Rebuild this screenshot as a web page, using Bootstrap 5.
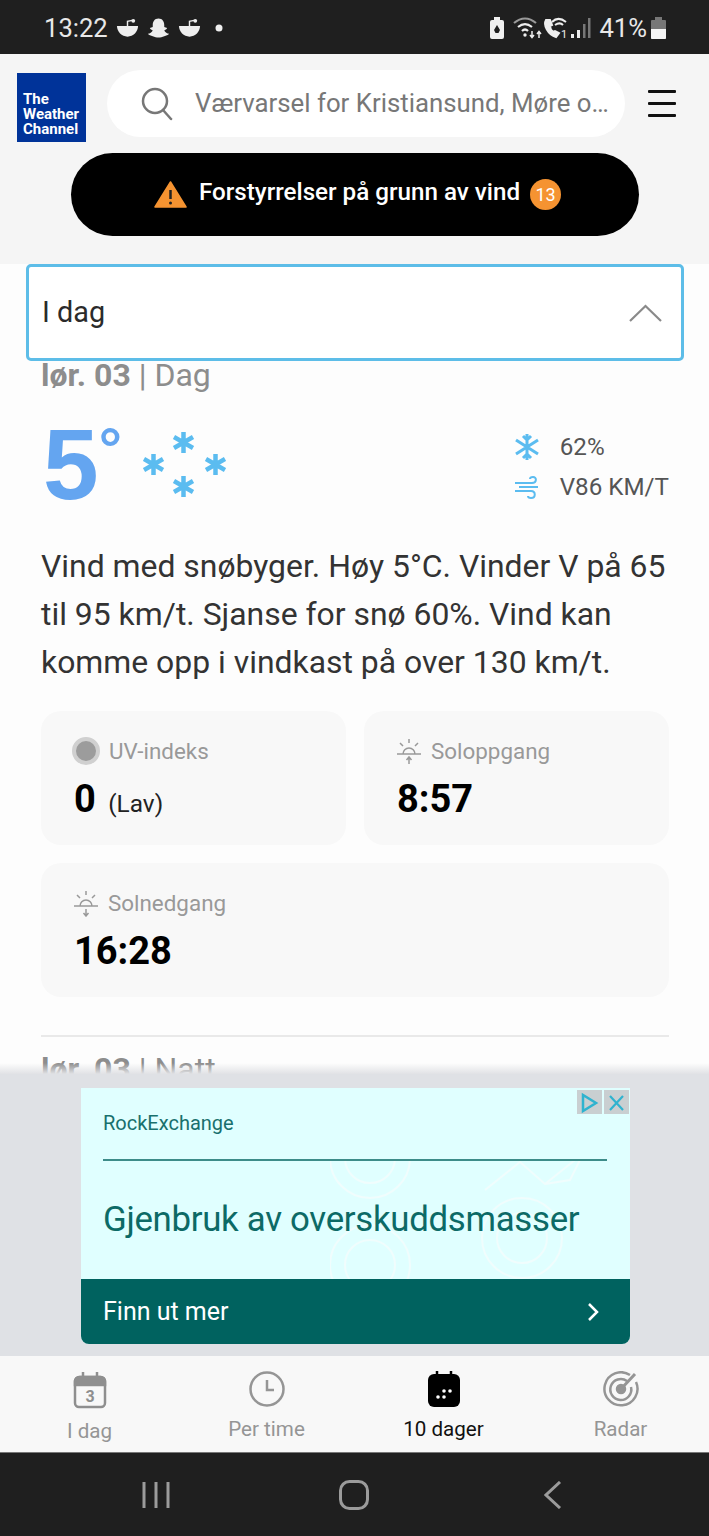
<!DOCTYPE html>
<html lang="no">
<head>
  <meta charset="UTF-8">
  <title>Værvarsel</title>
  <link href="https://cdn.jsdelivr.net/npm/bootstrap@5.3.0/dist/css/bootstrap.min.css" rel="stylesheet">
  <style>
    body { background: #fdfdfd; font-family: Roboto, "Liberation Sans", sans-serif; color: #333; }
    .phone { width: 709px; height: 1536px; overflow: hidden; }
    .status-bar { height: 54px; background: #1f1f1f; color: #e8e8e8; font-size: 25.6px; padding: 2px 43px 0 44px; flex: none; }
    .status-bar svg { display: block; }
    .note-icon { margin-left: 8px; }
    .note-dot { margin-left: 14px; }
    .top-area { height: 210px; background: #f5f5f5; flex: none; padding: 16px 33px 0 17px; }
    .wx-logo { width: 69px; height: 69px; margin-top: 3px; background: #003399; color: #fff; font-size: 15px; font-weight: 700; line-height: 15px; padding: 19px 0 0 6px; flex: none; }
    .search-pill { width: 518px; height: 67px; margin-left: 21px; padding-left: 34px; padding-right: 16px; background: #fff; color: #777; font-size: 25.8px; flex: none; }
    .search-pill svg { flex: none; margin-right: 22px; }
    .burger { width: 28px; margin-left: 23px; margin-top: 20px; flex: none; }
    .burger i { display: block; height: 3px; background: #111; margin-bottom: 9px; border-radius: 1px; }
    .alert-pill { width: 568px; height: 83px; margin: 11px 0 0 54px; padding-left: 5px; background: #000; color: #fff; font-size: 24.2px; font-weight: 500; border-radius: 42px; }
    .alert-text { margin-bottom: 5px; }
    .alert-num { width: 31px; height: 31px; border-radius: 50%; background: #f59331; font-size: 18px; font-weight: 400; margin-left: 10px; }
    .main-area { flex: 1 1 auto; overflow: hidden; position: relative; min-height: 0; padding: 0 40px 0 41px; }
    .day-select { height: 97px; margin: 0 -15px -1px; padding: 0 19px 0 13px; border: 3px solid #5dbde8; border-radius: 5px; font-size: 28.8px; color: #2b2b2b; background: #fff; }
    .part-title { font-size: 32px; color: #8d8d8d; line-height: 30px; }
    .now-row { height: 105px; margin-top: 29px; }
    .temp { font-family: "Liberation Sans", sans-serif; font-size: 100px; font-weight: 700; line-height: 90px; color: #64a5f0; margin-left: 2px; }
    .deg { font-family: "Liberation Sans", sans-serif; font-size: 58px; font-weight: 700; line-height: 50px; color: #64a5f0; margin-top: 4px; }
    .snow-icon { margin-left: 21px; margin-top: 13px; }
    .now-facts { font-size: 24.2px; color: #555; padding-top: 10px; }
    .now-facts svg { margin-right: 20px; }
    .forecast-text { font-size: 31.9px; line-height: 48px; color: #333; margin: 18px 0 25px; }
    .fact-grid { --bs-gutter-x: 18px; --bs-gutter-y: 18px; }
    .fact-box { background: #f8f8f8; border-radius: 20px; height: 134px; padding: 27px 0 0 32px; }
    .fact-label { font-size: 22.4px; color: #999; line-height: 26px; height: 26px; }
    .fact-label svg { margin-right: 9px; }
    .fact-value { font-size: 38px; font-weight: 700; color: #000; line-height: 44px; margin-top: 13px; margin-left: 1px; }
    .fact-value span { font-size: 24.4px; font-weight: 400; color: #222; margin-left: 3px; }
    .uv-dot { width: 28px; height: 28px; border-radius: 50%; background: #9c9c9c; border: 4px solid #d0d0d0; margin-left: -1px; margin-right: 9px; }
    .sep { border-top: 2px solid #e9e9e9; margin-top: 38px; }
    .night-title { margin-top: 17px; }
    .fade-bottom { position: absolute; left: 0; right: 0; bottom: 0; height: 11px; background: linear-gradient(rgba(225,226,229,0), #e1e2e5); }
    .ad-area { height: 282px; background: #dfe1e5; padding: 14px 79px 12px 81px; flex: none; }
    .ad-box { height: 256px; background: #e0ffff; border-radius: 0 0 8px 8px; overflow: hidden; position: relative; }
    .ad-marks { position: absolute; right: 0; top: 72px; }
    .ad-buttons { position: absolute; right: 1px; top: 2px; }
    .ad-buttons span { width: 25px; height: 24px; background: #c9cfd1; display: block; margin-left: 2px; }
    .ad-brand { font-size: 20px; color: #18706d; height: 71px; padding: 21px 0 0 22px; line-height: 28px; position: relative; }
    .ad-line { border-top: 2px solid #3d8c89; margin: 0 23px 0 22px; position: relative; }
    .ad-head { font-size: 34.8px; color: #0c6a66; height: 118px; padding: 36px 0 0 22px; line-height: 44px; position: relative; letter-spacing: -.3px; }
    .ad-cta { height: 65px; background: #00625f; color: #fff; font-size: 25px; padding: 0 30px 0 22px; position: relative; }
    .tab-bar { height: 97px; background: #f8f8f8; flex: none; border-bottom: 1px solid #777; padding-left: 1px; }
    .tab-item { width: 177.5px; padding-top: 15px; font-size: 20.6px; color: #959595; line-height: 24px; }
    .tab-item svg { display: block; margin: 0 auto 10px; }
    .tab-item.on { color: #111; }
    .nav-bar { height: 83px; background: #1f1f1f; flex: none; padding-left: 142px; }
    .nav-home { margin-left: 169px; }
    .nav-back { margin-left: 175px; }
  </style>
</head>
<body class="m-0">
  <div class="phone d-flex flex-column">

    <div class="status-bar d-flex align-items-center justify-content-between">
      <div class="d-flex align-items-center">
        <span>13:22</span>
        <!-- notification icons -->
        <svg class="note-icon" width="23" height="20" viewBox="0 0 24 20" fill="#eee"><path d="M1 8h22c0 6-5 11-11 11S1 14 1 8z"/><path d="M12 8V3l5-1" stroke="#eee" stroke-width="1.5" fill="none"/><circle cx="18" cy="2.5" r="2"/></svg>
        <svg class="note-icon" width="23" height="22" viewBox="0 0 24 22" fill="#eee"><path d="M12 1c4 0 6 3 6 7v2l3 1c-.5 1.500-2 2-3 2.500 1 2 3 3 5 3.500-1 2-3 1.500-5 2.500-2 .5-4 1.500-6 1.500s-4-1-6-1.500C4 18.500 2 19 1 17c2-.5 4-1.500 5-3.500-1-.5-2.500-1-3-2.500l3-1V8c0-4 2-7 6-7z"/></svg>
        <svg class="note-icon" width="23" height="20" viewBox="0 0 24 20" fill="#eee"><path d="M1 8h22c0 6-5 11-11 11S1 14 1 8z"/><path d="M12 8V3l5-1" stroke="#eee" stroke-width="1.5" fill="none"/><circle cx="18" cy="2.500" r="2"/></svg>
        <svg class="note-dot" width="8" height="8" viewBox="0 0 8 8" fill="#eee"><circle cx="4" cy="4" r="3.500"/></svg>
      </div>
      <div class="d-flex align-items-center">
        <svg class="me-2" width="16" height="24" viewBox="0 0 16 24" fill="#f0f0f0"><path d="M5 1h6v3h2a2 2 0 0 1 2 2v15a2 2 0 0 1-2 2H3a2 2 0 0 1-2-2V6a2 2 0 0 1 2-2h2z"/><path d="M8 9l3 5-1.500 3h-3L5 14z" fill="#1f1f1f"/></svg>
        <svg width="29" height="24" viewBox="0 0 29 24" fill="none" stroke="#eee" stroke-width="2.200"><path d="M1 7c7-6 15-6 22 0" stroke="#999"/><path d="M5 11c5-4 9-4 14 0M9 15c2-2 4-2 6 0"/><circle cx="12" cy="19" r="1.700" fill="#eee" stroke="none"/><path d="M19 15v6M17 19l2 2.500 2-2.500M26 22v-6M24 18l2-2.500 2 2.500" stroke-width="1.500"/></svg>
        <svg width="27" height="24" viewBox="0 0 27 24" fill="none" stroke="#eee" stroke-width="2"><path d="M4 4c-3 5 2 15 10 17l3-4-4-2-2 1c-2-2-3-4-3-6l2-1-2-5z" fill="#eee"/><path d="M10 6c4-4 9-4 14 0M13 9c3-2 6-2 8 0"/><text x="19" y="22" font-size="11" fill="#eee" stroke="none" font-family="Roboto">1</text></svg>
        <svg width="22" height="24" viewBox="0 0 22 24" fill="#eee"><rect x="2" y="18" width="3" height="4"/><rect x="8" y="14" width="3" height="8"/><rect x="14" y="8" width="2.500" height="14" fill="#777"/><rect x="19" y="2" width="2.500" height="20" fill="#777"/></svg>
        <span class="ms-2">41%</span>
        <svg class="ms-1" width="15" height="24" viewBox="0 0 15 24"><path d="M4 1h7v3h3a1 1 0 0 1 1 1v17a1 1 0 0 1-1 1H1a1 1 0 0 1-1-1V5a1 1 0 0 1 1-1h3z" fill="#777"/><path d="M0 13h15v9a1 1 0 0 1-1 1H1a1 1 0 0 1-1-1z" fill="#f4f4f4"/></svg>
      </div>
    </div>

    <div class="top-area">
      <div class="d-flex">
        <div class="wx-logo">The<br>Weather<br>Channel</div>
        <div class="search-pill rounded-pill d-flex align-items-center">
          <svg width="32" height="34" viewBox="0 0 32 34" fill="none" stroke="#777" stroke-width="2.500"><circle cx="14" cy="14" r="12"/><path d="M22 23l8 9" stroke-linecap="round"/></svg>
          <span class="text-truncate">Værvarsel for Kristiansund, Møre og Romsdal</span>
        </div>
        <div class="burger"><i></i><i></i><i></i></div>
      </div>
      <div class="alert-pill d-flex align-items-center justify-content-center">
        <svg class="me-2" width="33" height="27" viewBox="0 0 33 27"><path d="M16.500 1L32 26H1z" fill="#f59331" stroke="#f59331" stroke-width="1.500" stroke-linejoin="round"/><path d="M16.500 9v9" stroke="#222" stroke-width="2.500"/><circle cx="16.500" cy="22" r="1.500" fill="#222"/></svg>
        <span class="ms-1 alert-text">Forstyrrelser på grunn av vind</span>
        <span class="alert-num d-flex align-items-center justify-content-center">13</span>
      </div>
    </div>

    <div class="main-area">
      <div class="day-select d-flex align-items-center justify-content-between">
        <span>I dag</span>
        <svg width="33" height="18" viewBox="0 0 33 18" fill="none" stroke="#8a8a8a" stroke-width="2.200"><path d="M1 17L16.500 2 32 17"/></svg>
      </div>
      <div class="part-title"><b>lør. 03</b> | Dag</div>

      <div class="now-row d-flex justify-content-between">
        <div class="d-flex align-items-start">
          <div class="temp">5</div>
          <div class="deg">°</div>
          <svg class="snow-icon" width="83" height="65" viewBox="0 0 83 65" stroke="#5bbcf0" stroke-width="4.500">
            <path d="M40.500 0v21M31 5l19 11M50 5L31 16"/>
            <path d="M10.500 22v21M1 27l19 11M20 27L1 38"/>
            <path d="M72.500 22v21M63 27l19 11M82 27L63 38"/>
            <path d="M40.500 44v21M31 49l19 11M50 49L31 60"/>
          </svg>
        </div>
        <div class="now-facts">
          <div class="d-flex align-items-center">
            <svg width="26" height="28" viewBox="0 0 26 28" fill="none" stroke="#5bbcf0" stroke-width="3"><path d="M13 1v26M2 7l22 14M24 7L2 21M9 3l4 4 4-4M9 25l4-4 4 4"/></svg>
            <span>62%</span>
          </div>
          <div class="d-flex align-items-center mt-1">
            <svg width="26" height="24" viewBox="0 0 26 24" fill="none" stroke="#5bbcf0" stroke-width="2"><path d="M1 8h17c5 0 5-6 1-6-2 0-3 1-3 2M5 12h19M1 16h16c5 0 5 7 0 7-2 0-3-1-3-2"/></svg>
            <span>V86 KM/T</span>
          </div>
        </div>
      </div>

      <p class="forecast-text">Vind med snøbyger. Høy 5°C. Vinder V på 65 til 95 km/t. Sjanse for snø 60%. Vind kan komme opp i vindkast på over 130 km/t.</p>

      <div class="row fact-grid">
        <div class="col-6">
          <div class="fact-box">
            <div class="fact-label d-flex align-items-center"><span class="uv-dot"></span>UV-indeks</div>
            <div class="fact-value">0 <span>(Lav)</span></div>
          </div>
        </div>
        <div class="col-6">
          <div class="fact-box">
            <div class="fact-label d-flex align-items-center">
              <svg width="26" height="28" viewBox="0 0 26 28" fill="none" stroke="#999" stroke-width="1.500"><path d="M1 17h24M7 17a6 6 0 0 1 12 0M13 2v4M4 6l3 3M22 6l-3 3M13 20v7M10.500 23l2.500-3 2.500 3"/></svg>
              Soloppgang
            </div>
            <div class="fact-value">8:57</div>
          </div>
        </div>
        <div class="col-12">
          <div class="fact-box">
            <div class="fact-label d-flex align-items-center">
              <svg width="26" height="28" viewBox="0 0 26 28" fill="none" stroke="#999" stroke-width="1.500"><path d="M1 17h24M7 17a6 6 0 0 1 12 0M13 2v4M4 6l3 3M22 6l-3 3M13 20v7M10.500 24l2.500 3 2.500-3"/></svg>
              Solnedgang
            </div>
            <div class="fact-value">16:28</div>
          </div>
        </div>
      </div>

      <div class="sep"></div>
      <div class="part-title night-title"><b>lør. 03</b> | Natt</div>
      <div class="fade-bottom"></div>
    </div>

    <div class="ad-area">
      <div class="ad-box">
        <svg class="ad-marks" width="300" height="184" viewBox="0 0 300 184" fill="none" stroke="#f0fdfd" stroke-width="2"><circle cx="40" cy="-2" r="40"/><circle cx="40" cy="-2" r="25"/><circle cx="40" cy="105" r="40"/><circle cx="40" cy="105" r="25"/><circle cx="192" cy="78" r="40"/><circle cx="192" cy="78" r="25"/><path d="M155 30l35-28 25 22 30-24M250 0l-10 20-25 4"/></svg>
        <div class="ad-buttons d-flex">
          <span><svg width="25" height="24" viewBox="0 0 25 24" fill="none" stroke="#2fb3cf" stroke-width="2.500"><path d="M6 4v16l13-8z"/></svg></span>
          <span><svg width="25" height="24" viewBox="0 0 25 24" fill="none" stroke="#2fb3cf" stroke-width="2.200"><path d="M6 5l13 14M19 5L6 19"/></svg></span>
        </div>
        <div class="ad-brand">RockExchange</div>
        <div class="ad-line"></div>
        <div class="ad-head">Gjenbruk av overskuddsmasser</div>
        <div class="ad-cta d-flex align-items-center justify-content-between">
          <span>Finn ut mer</span>
          <svg width="13" height="20" viewBox="0 0 13 20" fill="none" stroke="#fff" stroke-width="2.500"><path d="M2 2l8 8-8 8"/></svg>
        </div>
      </div>
    </div>

    <div class="tab-bar d-flex text-center">
      <div class="tab-item">
        <svg width="34" height="38" viewBox="0 0 34 38" fill="none" stroke="#8f8f8f" stroke-width="2.500"><rect x="2" y="6" width="30" height="30" rx="4"/><path d="M2 11a5 5 0 0 1 5-5h20a5 5 0 0 1 5 5v3H2z" fill="#8f8f8f"/><path d="M10 1v6M24 1v6"/><text x="17" y="31" text-anchor="middle" font-size="16" font-weight="700" fill="#8f8f8f" stroke="none" font-family="Roboto">3</text></svg>
        <span>I dag</span>
      </div>
      <div class="tab-item">
        <svg width="36" height="36" viewBox="0 0 36 36" fill="none" stroke="#959595" stroke-width="2.500"><circle cx="18" cy="18" r="16.500"/><path d="M18 9v10h7"/></svg>
        <span>Per time</span>
      </div>
      <div class="tab-item on">
        <svg width="34" height="36" viewBox="0 0 34 36"><path d="M10 0v4M24 0v4" stroke="#000" stroke-width="2.500"/><rect x="1" y="3" width="32" height="33" rx="6" fill="#000"/><g fill="#fff"><circle cx="11" cy="26" r="1.800"/><circle cx="17" cy="26" r="1.800"/><circle cx="17" cy="20" r="1.800"/><circle cx="23" cy="20" r="1.800"/></g></svg>
        <span>10 dager</span>
      </div>
      <div class="tab-item">
        <svg width="36" height="36" viewBox="0 0 36 36" fill="none" stroke="#959595" stroke-width="2.500"><path d="M27 4A16.500 16.500 0 1 0 33 11"/><path d="M24 10a10.500 10.500 0 1 0 4 6"/><circle cx="18" cy="18" r="4" fill="#959595"/><path d="M18 18L32 3" stroke-width="3"/></svg>
        <span>Radar</span>
      </div>
    </div>

    <div class="nav-bar d-flex align-items-center">
      <svg width="28" height="28" viewBox="0 0 28 28" stroke="#9b9b9b" stroke-width="3"><path d="M2 1v26M14 1v26M26 1v26"/></svg>
      <svg class="nav-home" width="30" height="30" viewBox="0 0 30 30" fill="none" stroke="#9b9b9b" stroke-width="3"><rect x="1.500" y="1.500" width="27" height="27" rx="9"/></svg>
      <svg class="nav-back" width="18" height="28" viewBox="0 0 18 28" fill="none" stroke="#9b9b9b" stroke-width="3"><path d="M16 1L2 14l14 13"/></svg>
    </div>
  </div>
  <script src="https://cdn.jsdelivr.net/npm/bootstrap@5.3.0/dist/js/bootstrap.bundle.min.js"></script>
</body>
</html>
